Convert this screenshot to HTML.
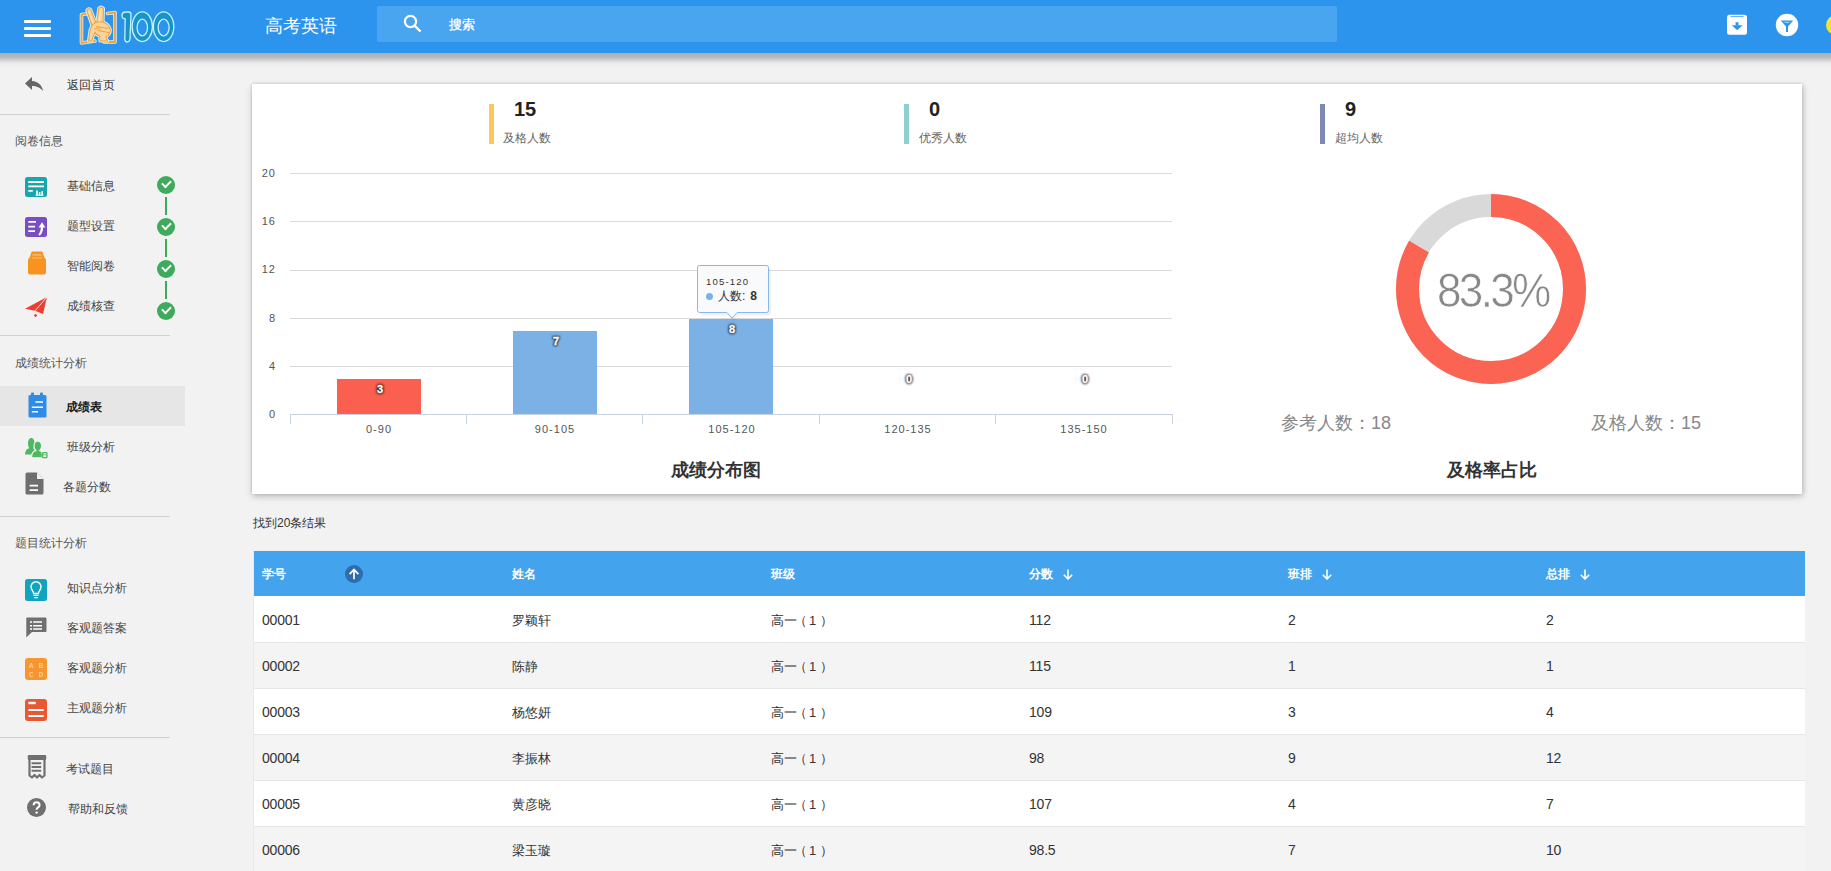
<!DOCTYPE html>
<html><head><meta charset="utf-8">
<style>
*{box-sizing:border-box;margin:0;padding:0}
html,body{width:1831px;height:871px;overflow:hidden;background:#f2f2f2;font-family:"Liberation Sans",sans-serif;color:#333}
.abs{position:absolute}
#hdr{position:absolute;left:0;top:0;width:1831px;height:53px;background:#2c94ec;z-index:5}
#hsh{position:absolute;left:0;top:53px;width:1831px;height:16px;z-index:4;background:linear-gradient(#9db4cc 0px,#b5b3b2 2px,#b9b8b8 4px,#c3c9cf 6px,#dcdbd8 8px,#e9e9e8 10px,#efefef 12px,#f2f2f2 16px)}
#side{position:absolute;left:0;top:52px;width:185px;height:819px}
.sd{position:absolute;left:0;width:170px;height:1px;background:#d0d0d0}
.st{position:absolute;left:15px;font-size:12px;color:#555;line-height:14px;white-space:nowrap}
.it{position:absolute;left:67px;font-size:12px;color:#444;line-height:14px;white-space:nowrap}
.ic{position:absolute}
.chk{position:absolute;left:157px;width:18px;height:18px;border-radius:50%;background:#3daa5c}
.chk:after{content:"";position:absolute;left:5px;top:4px;width:7px;height:4px;border-left:2px solid #fff;border-bottom:2px solid #fff;transform:rotate(-45deg)}
.vl{position:absolute;left:165px;width:2px;background:#3daa5c}
#card{position:absolute;left:252px;top:84px;width:1550px;height:410px;background:#fff;box-shadow:0 3px 7px rgba(0,0,0,.16),2px 1px 5px rgba(0,0,0,.12),-1px 0 2px rgba(0,0,0,.07),0 -1px 2px rgba(0,0,0,.04)}
.sbar{position:absolute;width:5px;height:40px;top:104px}
.snum{position:absolute;top:98px;font-size:20px;font-weight:bold;color:#222;line-height:22px}
.slab{position:absolute;top:131px;font-size:12px;color:#666;line-height:14px;white-space:nowrap}
.yl{position:absolute;font-size:11px;color:#555;width:30px;text-align:right;line-height:12px;letter-spacing:1px}
.gl{position:absolute;left:290px;width:882px;height:1px;background:#dadada}
.xl{position:absolute;font-size:11px;color:#555;text-align:center;width:178px;line-height:12px;letter-spacing:1px}
.bar{position:absolute;background:#7cb1e6}
.blab{position:absolute;font-size:11px;font-weight:bold;color:#fff;text-align:center;width:84px;line-height:12px;-webkit-text-stroke:0.3px #fff}
.bsh{position:absolute;font-size:11px;font-weight:bold;color:#111;text-align:center;width:84px;line-height:12px;-webkit-text-stroke:2.2px #111;filter:blur(1px);opacity:.85}
#tbl{position:absolute;left:254px;top:551px;width:1551px;box-shadow:-1px 0 0 #e8e8e8}
.tr{position:relative;height:46px;border-bottom:1px solid #e6e6e6}
.th{height:46px;background:#44a3ed;border-bottom:1px solid #fbfdff}
.td{position:absolute;top:1px;line-height:45px;font-size:13px;color:#333;white-space:nowrap}
.n{font-size:14px;letter-spacing:-0.2px}
.pl{margin-left:-3px;margin-right:2px}.pr{margin-left:4px}
.th .td{top:1px;line-height:45px;font-size:12px;font-weight:bold;color:#fff}
</style></head><body>

<div id="hdr">
  <!-- hamburger -->
  <div class="abs" style="left:24px;top:20px;width:27px;height:3px;background:#fff;border-radius:1px"></div>
  <div class="abs" style="left:24px;top:27px;width:27px;height:3px;background:#fff;border-radius:1px"></div>
  <div class="abs" style="left:24px;top:34px;width:27px;height:3px;background:#fff;border-radius:1px"></div>
  <!-- logo -->
  <svg class="abs" style="left:74px;top:2px" width="106" height="48" viewBox="74 2 106 48">
    <g fill="none" stroke-linejoin="round" stroke-linecap="round">
      <path d="M86 14 L81.5 14.5 L81.5 43 L95 41" stroke="#d6f1ff" stroke-width="3.6"/>
      <path d="M107.5 13.5 L115 12.5 L115 42 L104 42" stroke="#d6f1ff" stroke-width="3.6"/>
      <path d="M86 14 L81.5 14.5 L81.5 43 L95 41" stroke="#f2a33a" stroke-width="2"/>
      <path d="M107.5 13.5 L115 12.5 L115 42 L104 42" stroke="#f2a33a" stroke-width="2"/>
    </g>
    <g stroke-linejoin="round" stroke-linecap="round">
      <g fill="none" stroke="#d6f1ff" stroke-width="3">
        <path d="M86.8 10.5 Q88.5 7.5 90.8 9.8 L95.5 22 L92.5 27 Z"/>
        <path d="M98.7 8.5 Q101 5.8 103.5 8.3 L103 23 L96.8 23 Z"/>
        <path d="M92 25 Q96 21 103 22 Q109 24 110.5 30 Q110 35 106 36.5 L107.5 41 L100 41 L99.5 36 Q96 35 95 32 L91.5 41 L88.5 41 L90 30 Z"/>
      </g>
      <g fill="#f7d59c" stroke="#f0a23c" stroke-width="1.1">
        <path d="M86.8 10.5 Q88.5 7.5 90.8 9.8 L95.5 22 L92.5 27 Z"/>
        <path d="M98.7 8.5 Q101 5.8 103.5 8.3 L103 23 L96.8 23 Z"/>
        <path d="M92 25 Q96 21 103 22 Q109 24 110.5 30 Q110 35 106 36.5 L107.5 41 L100 41 L99.5 36 Q96 35 95 32 L91.5 41 L88.5 41 L90 30 Z"/>
      </g>
      <path d="M96.5 26.5 L108 28.5 M97.5 30.5 L108.5 32.5 M94.5 29 Q98 26.5 101 30" fill="none" stroke="#f0a23c" stroke-width="1"/>
      <path d="M89 12 L93 23 M100 10 L99.5 21" fill="none" stroke="#fbe9c8" stroke-width="0.9"/>
    </g>
    <g fill="#1795cb" stroke="#c4f2ff" stroke-width="1.3" fill-rule="evenodd">
      <path d="M122 15.5 Q122 12 126 12 L128.5 12 Q131 12 131 14.5 L130 39 Q129.5 42 127.2 42 Q124.8 42 124.8 39 L125.2 19 Q122 18.8 122 15.5 Z"/>
      <path d="M142.3 11.8 A10.1 14.9 0 1 1 142.3 41.6 A10.1 14.9 0 1 1 142.3 11.8 Z M142.3 19.2 A5.2 8.3 0 1 0 142.3 35.8 A5.2 8.3 0 1 0 142.3 19.2 Z"/>
      <path d="M163.6 11.8 A10.2 14.9 0 1 1 163.6 41.6 A10.2 14.9 0 1 1 163.6 11.8 Z M163.6 19.2 A5.5 8.3 0 1 0 163.6 35.8 A5.5 8.3 0 1 0 163.6 19.2 Z"/>
    </g>
  </svg>
  <div class="abs" style="left:265px;top:15px;font-size:18px;color:#fff;line-height:22px">高考英语</div>
  <div class="abs" style="left:377px;top:6px;width:960px;height:36px;background:#4aa5f1;border-radius:2px"></div>
  <svg class="abs" style="left:403px;top:14px" width="19" height="19" viewBox="0 0 19 19"><circle cx="7.5" cy="7.5" r="5.6" fill="none" stroke="#fff" stroke-width="2.2"/><path d="M11.5 11.5 L17.5 17.5" stroke="#fff" stroke-width="2.4"/></svg>
  <div class="abs" style="left:449px;top:17px;font-size:13px;color:#fff;line-height:15px;-webkit-text-stroke:0.3px #fff">搜索</div>
  <!-- right icons -->
  <svg class="abs" style="left:1727px;top:14px" width="21" height="22" viewBox="0 0 21 22"><rect x="0" y="0.8" width="20" height="20" rx="2.5" fill="#fff"/><path d="M3.5 2.6 H16.5" stroke="#2c94ec" stroke-width="0.8"/><rect x="8.6" y="8.2" width="2.8" height="3.5" fill="#2c94ec"/><path d="M4.8 11.3 H15.6 L10.2 16.3 Z" fill="#2c94ec"/></svg>
  <svg class="abs" style="left:1775px;top:13px" width="24" height="24" viewBox="0 0 24 24"><circle cx="12" cy="12" r="11.2" fill="#fff"/><path d="M5.8 7.6 H18.2 L13 13.4 V19 H11 V13.4 Z" fill="#2c94ec"/><path d="M8 8.8 H16 L12 10.2 Z" fill="#9fd8fb"/></svg>
  <div class="abs" style="left:1826px;top:15px;width:20px;height:20px;border-radius:50%;background:#f4e236"></div>
</div>

<div id="hsh"></div>
<div id="side"></div>
<!-- sidebar content in page coords -->
<svg class="abs" style="left:24px;top:76px" width="20" height="16" viewBox="0 0 20 16"><path d="M8 1 L1 7.5 L8 14 V10 C13 10 16 11.5 19 15 C18 9 14 5.5 8 5 Z" fill="#666"/></svg>
<div class="it" style="left:67px;top:78px;color:#333">返回首页</div>
<div class="sd" style="top:114px"></div>

<div class="st" style="top:134px">阅卷信息</div>
<svg class="abs" style="left:25px;top:177px" width="22" height="20" viewBox="0 0 22 20"><rect width="22" height="20" rx="2.5" fill="#17a6ab"/><path d="M3.3 5 H19 M3.3 9.4 H19 M3.3 13.8 H7.8" stroke="#fff" stroke-width="1.8"/><path d="M10.5 18.3 H18.5" stroke="#fff" stroke-width="1"/><rect x="11.2" y="13.5" width="1.6" height="4.6" fill="#fff"/><rect x="13.8" y="15" width="1.6" height="3.2" fill="#fff"/><rect x="16.4" y="14.2" width="1.6" height="4" fill="#fff"/></svg>
<div class="it" style="top:179px">基础信息</div>
<div class="chk" style="top:176px"></div>
<div class="vl" style="top:197px;height:18px"></div>
<svg class="abs" style="left:25px;top:217px" width="22" height="20" viewBox="0 0 22 20"><rect width="22" height="20" rx="2.5" fill="#7a4ec3"/><path d="M3.3 4.8 H11 M3.3 9.6 H10 M3.3 14.1 H10" stroke="#fff" stroke-width="1.8"/><path d="M14 18 C16.5 16 17 13 17 9.5" fill="none" stroke="#fff" stroke-width="2.2"/><path d="M13.6 10.5 L17 5.2 L20.4 10.5 Z" fill="#fff"/></svg>
<div class="it" style="top:219px">题型设置</div>
<div class="chk" style="top:218px"></div>
<div class="vl" style="top:239px;height:18px"></div>
<svg class="abs" style="left:28px;top:251px" width="18" height="24" viewBox="0 0 18 24"><path d="M3.5 1 Q3.5 0.5 4 0.5 H14 Q14.5 0.5 14.5 1 L16.5 7 Q18 7.5 18 9 V21.5 Q18 23.5 16 23.5 H2 Q0 23.5 0 21.5 V9 Q0 7.5 1.5 7 Z" fill="#f7931e"/><path d="M4.5 3.8 H13.5 M4 7 H14" stroke="#fbc27e" stroke-width="1.2"/></svg>
<div class="it" style="top:259px">智能阅卷</div>
<div class="chk" style="top:260px"></div>
<div class="vl" style="top:281px;height:18px"></div>
<svg class="abs" style="left:25px;top:296px" width="23" height="22" viewBox="0 0 23 22"><path d="M0 12.7 L22 1 L18 18 L10 14.8 Z" fill="#ee3d2f"/><path d="M22 1 L10 14.8" stroke="#fff" stroke-width="0.8"/><rect x="9.3" y="18.2" width="2.5" height="2.5" fill="#ee3d2f" transform="rotate(45 10.5 19.5)"/></svg>
<div class="it" style="top:299px">成绩核查</div>
<div class="chk" style="top:302px"></div>
<div class="sd" style="top:335px"></div>

<div class="st" style="top:356px">成绩统计分析</div>
<div class="abs" style="left:0;top:386px;width:185px;height:40px;background:#e6e6e6"></div>
<svg class="abs" style="left:28px;top:392px" width="19" height="26" viewBox="0 0 19 26"><path d="M2 3 H17 Q18.5 3 18.5 4.5 V24 Q18.5 25.5 17 25.5 H2 Q0.5 25.5 0.5 24 V4.5 Q0.5 3 2 3 Z" fill="#2f8be6"/><rect x="3" y="0.5" width="3" height="4" rx="1" fill="#2f8be6"/><rect x="12" y="0.5" width="3" height="4" rx="1" fill="#2f8be6"/><path d="M7.4 10 H15 M3.8 15.3 H15 M3.8 19.8 H10" stroke="#fff" stroke-width="1.6"/></svg>
<div class="it" style="left:66px;top:400px;font-weight:bold;color:#222">成绩表</div>
<svg class="abs" style="left:25px;top:437px" width="23" height="22" viewBox="0 0 23 22"><path d="M3 6 A3.3 5 0 0 1 9.6 6 Q9.6 9.5 8.3 11.2 L9.5 12 Q10 16 8 17.6 H0 Q0 12.5 4.2 11.3 Q3 9.5 3 6 Z" fill="#4cb860"/><path d="M9 8.7 A3.8 4.6 0 0 1 16.6 8.7 Q16.6 12 14.8 13.6 Q17.3 14 17.3 17 V20.8 H6.6 Q6.6 14 10.8 13.6 Q9 12 9 8.7 Z" fill="#4cb860" stroke="#f2f2f2" stroke-width="1.2"/><rect x="17.6" y="15.6" width="4.3" height="5" rx="0.6" fill="#f2f2f2" stroke="#4cb860" stroke-width="1.3"/><path d="M18 17.8 H21.5" stroke="#4cb860" stroke-width="0.8"/></svg>
<div class="it" style="top:440px">班级分析</div>
<svg class="abs" style="left:25px;top:472px" width="19" height="23" viewBox="0 0 19 23"><path d="M2 0.5 H12 L18.5 7 V21 Q18.5 22.5 17 22.5 H2 Q0.5 22.5 0.5 21 V2 Q0.5 0.5 2 0.5 Z" fill="#6e6e6e"/><path d="M12 0.5 V7 H18.5" fill="#fff" opacity="0.9"/><path d="M4.6 13.7 H13 M4.6 18.2 H13" stroke="#fff" stroke-width="1.8"/></svg>
<div class="it" style="left:63px;top:480px">各题分数</div>
<div class="sd" style="top:516px"></div>

<div class="st" style="top:536px">题目统计分析</div>
<svg class="abs" style="left:25px;top:579px" width="22" height="22" viewBox="0 0 22 22"><rect width="22" height="22" rx="2.5" fill="#12a3c0"/><path d="M8.6 14.5 C8.6 12 6 11 6 7.8 A5 5 0 0 1 16 7.8 C16 11 13.4 12 13.4 14.5 Z" fill="none" stroke="#fff" stroke-width="1.4"/><path d="M8.5 16.3 H13.5 M9 18.6 H13" stroke="#fff" stroke-width="1.3"/></svg>
<div class="it" style="top:581px">知识点分析</div>
<svg class="abs" style="left:26px;top:617px" width="21" height="21" viewBox="0 0 21 21"><path d="M1 0.5 H19.5 Q20.5 0.5 20.5 1.5 V14 Q20.5 15 19.5 15 H6 L0.3 20.5 V1.5 Q0.3 0.5 1 0.5 Z" fill="#6f6f6f"/><path d="M4 5 H6 M4 8.7 H6 M4 12 H6 M7.2 5 H16 M7.2 8.7 H16 M7.2 12 H16" stroke="#fff" stroke-width="1.6"/></svg>
<div class="it" style="top:621px">客观题答案</div>
<svg class="abs" style="left:25px;top:658px" width="22" height="22" viewBox="0 0 22 22"><rect width="22" height="22" rx="3" fill="#f8952e"/><text x="6.3" y="9.5" font-family="Liberation Mono" font-size="7.5" fill="#fde0bd" text-anchor="middle">A</text><text x="16" y="9.5" font-family="Liberation Mono" font-size="7.5" fill="#fde0bd" text-anchor="middle">B</text><text x="6.3" y="19" font-family="Liberation Mono" font-size="7.5" fill="#fde0bd" text-anchor="middle">C</text><text x="16" y="19" font-family="Liberation Mono" font-size="7.5" fill="#fde0bd" text-anchor="middle">D</text></svg>
<div class="it" style="top:661px">客观题分析</div>
<svg class="abs" style="left:25px;top:699px" width="22" height="22" viewBox="0 0 22 22"><rect width="22" height="22" rx="3" fill="#ea5733"/><path d="M3.4 4 H10.7" stroke="#fff" stroke-width="2.4"/><path d="M3.4 11 H18.7 M3.4 17 H18.7" stroke="#fff" stroke-width="2"/></svg>
<div class="it" style="top:701px">主观题分析</div>
<div class="sd" style="top:737px"></div>

<svg class="abs" style="left:27px;top:754px" width="20" height="25" viewBox="0 0 20 25"><path d="M2.5 5 V21.5 L5 23.5 L7.5 21 L10 23.5 L12.5 21 L15 23.5 L17.5 21.5 V5" fill="none" stroke="#707070" stroke-width="2.2" stroke-linejoin="round"/><rect x="0.8" y="1" width="18.4" height="5" rx="1.2" fill="#707070"/><path d="M4.6 9.2 H14.2 M4.6 13 H14.2 M4.6 16.7 H14.2" stroke="#707070" stroke-width="2"/></svg>
<div class="it" style="left:66px;top:762px">考试题目</div>
<svg class="abs" style="left:27px;top:798px" width="19" height="19" viewBox="0 0 19 19"><circle cx="9.5" cy="9.5" r="9.5" fill="#707070"/><path d="M6.6 7.3 Q6.6 4.2 9.6 4.2 Q12.6 4.2 12.6 7 Q12.6 8.6 10.8 9.6 Q9.6 10.3 9.6 11.8" fill="none" stroke="#fff" stroke-width="2"/><circle cx="9.6" cy="14.6" r="1.2" fill="#fff"/></svg>
<div class="it" style="left:68px;top:802px">帮助和反馈</div>

<!-- card -->
<div id="card"></div>
<div class="sbar" style="left:489px;background:#fcc85d"></div>
<div class="snum" style="left:514px">15</div>
<div class="slab" style="left:503px">及格人数</div>
<div class="sbar" style="left:904px;background:#8ecfd2"></div>
<div class="snum" style="left:929px">0</div>
<div class="slab" style="left:919px">优秀人数</div>
<div class="sbar" style="left:1320px;background:#7e89b3"></div>
<div class="snum" style="left:1345px">9</div>
<div class="slab" style="left:1335px">超均人数</div>

<div class="yl" style="left:246px;top:167px">20</div>
<div class="yl" style="left:246px;top:215px">16</div>
<div class="yl" style="left:246px;top:263px">12</div>
<div class="yl" style="left:246px;top:312px">8</div>
<div class="yl" style="left:246px;top:360px">4</div>
<div class="yl" style="left:246px;top:408px">0</div>
<div class="gl" style="top:173px"></div>
<div class="gl" style="top:221px"></div>
<div class="gl" style="top:270px"></div>
<div class="gl" style="top:318px"></div>
<div class="gl" style="top:366px"></div>
<div class="gl" style="top:414px;background:#c7d3e0"></div>
<div class="abs" style="left:290px;top:414px;width:1px;height:10px;background:#c7d3e0"></div>
<div class="abs" style="left:466px;top:414px;width:1px;height:10px;background:#c7d3e0"></div>
<div class="abs" style="left:642px;top:414px;width:1px;height:10px;background:#c7d3e0"></div>
<div class="abs" style="left:819px;top:414px;width:1px;height:10px;background:#c7d3e0"></div>
<div class="abs" style="left:995px;top:414px;width:1px;height:10px;background:#c7d3e0"></div>
<div class="abs" style="left:1172px;top:414px;width:1px;height:10px;background:#c7d3e0"></div>
<div class="xl" style="left:290px;top:423px">0-90</div>
<div class="xl" style="left:466px;top:423px">90-105</div>
<div class="xl" style="left:643px;top:423px">105-120</div>
<div class="xl" style="left:819px;top:423px">120-135</div>
<div class="xl" style="left:995px;top:423px">135-150</div>

<div class="bar" style="left:337px;top:379px;width:84px;height:35px;background:#fa5f4f"></div>
<div class="bar" style="left:513px;top:331px;width:84px;height:83px"></div>
<div class="bar" style="left:689px;top:319px;width:84px;height:95px"></div>
<div class="bsh" style="left:338px;top:383px">3</div><div class="blab" style="left:338px;top:383px">3</div>
<div class="bsh" style="left:514px;top:335px">7</div><div class="blab" style="left:514px;top:335px">7</div>
<div class="bsh" style="left:690px;top:323px">8</div><div class="blab" style="left:690px;top:323px">8</div>
<div class="bsh" style="left:867px;top:373px">0</div><div class="blab" style="left:867px;top:373px">0</div>
<div class="bsh" style="left:1043px;top:373px">0</div><div class="blab" style="left:1043px;top:373px">0</div>

<!-- tooltip -->
<svg class="abs" style="left:694px;top:262px" width="80" height="60" viewBox="0 0 80 60">
  <path d="M7 5.5 H74 Q76 5.5 76 7.5 V50.5 Q76 52.5 74 52.5 H43 L38 58 L33 52.5 H7 Q5 52.5 5 50.5 V7.5 Q5 5.5 7 5.5 Z" fill="rgba(0,0,0,.06)" transform="translate(1 1)"/>
  <path d="M5.5 3.5 H72.5 Q74.5 3.5 74.5 5.5 V48.5 Q74.5 50.5 72.5 50.5 H43 L38 56 L33 50.5 H5.5 Q3.5 50.5 3.5 48.5 V5.5 Q3.5 3.5 5.5 3.5 Z" fill="#f9fafc" stroke="#86b8ea" stroke-width="1"/>
</svg>
<div class="abs" style="left:706px;top:276px;font-size:9.5px;color:#333;line-height:11px;letter-spacing:1.2px">105-120</div>
<div class="abs" style="left:706px;top:293px;width:7px;height:7px;border-radius:50%;background:#7cb1e6"></div>
<div class="abs" style="left:718px;top:289px;font-size:12px;color:#333;line-height:14px;white-space:nowrap">人数:&thinsp;&thinsp;<b>8</b></div>

<div class="abs" style="left:671px;top:459px;font-size:18px;font-weight:bold;color:#333;line-height:22px">成绩分布图</div>

<!-- donut -->
<svg class="abs" style="left:1391px;top:189px" width="200" height="200" viewBox="0 0 200 200">
  <circle cx="100" cy="100" r="83.5" fill="none" stroke="#d9d9d9" stroke-width="23"/>
  <circle cx="100" cy="100" r="83.5" fill="none" stroke="#fb6352" stroke-width="23" stroke-dasharray="437.2 600" transform="rotate(-90 100 100)"/>
</svg>
<div class="abs" style="left:1437px;top:264px;font-size:49px;color:#888;line-height:53px;letter-spacing:-3px;transform:scaleX(0.9);transform-origin:0 0;-webkit-text-stroke:0.7px #fff;white-space:nowrap">83.3%</div>
<div class="abs" style="left:1281px;top:412px;font-size:18px;color:#888;line-height:22px">参考人数：18</div>
<div class="abs" style="left:1591px;top:412px;font-size:18px;color:#888;line-height:22px">及格人数：15</div>
<div class="abs" style="left:1447px;top:459px;font-size:18px;font-weight:bold;color:#333;line-height:22px">及格率占比</div>

<div class="abs" style="left:253px;top:516px;font-size:12px;color:#333;line-height:14px">找到20条结果</div>

<div id="tbl">
  <div class="tr th">
    <div class="td" style="left:8px">学号</div>
    <svg class="abs" style="left:91px;top:14px" width="18" height="18" viewBox="0 0 18 18"><circle cx="9" cy="9" r="9" fill="#2d6cae"/><path d="M9 14.2 V4.8 M4.6 9.2 L9 4.6 L13.4 9.2" fill="none" stroke="#fff" stroke-width="1.7"/></svg>
    <div class="td" style="left:258px">姓名</div>
    <div class="td" style="left:517px">班级</div>
    <div class="td" style="left:775px">分数</div>
    <svg class="abs" style="left:809px;top:18px" width="10" height="11" viewBox="0 0 10 11"><path d="M5 0.5 V10 M0.8 5.8 L5 10 L9.2 5.8" fill="none" stroke="#fff" stroke-width="1.6"/></svg>
    <div class="td" style="left:1034px">班排</div>
    <svg class="abs" style="left:1068px;top:18px" width="10" height="11" viewBox="0 0 10 11"><path d="M5 0.5 V10 M0.8 5.8 L5 10 L9.2 5.8" fill="none" stroke="#fff" stroke-width="1.6"/></svg>
    <div class="td" style="left:1292px">总排</div>
    <svg class="abs" style="left:1326px;top:18px" width="10" height="11" viewBox="0 0 10 11"><path d="M5 0.5 V10 M0.8 5.8 L5 10 L9.2 5.8" fill="none" stroke="#fff" stroke-width="1.6"/></svg>
  </div>
  <div class="tr" style="background:#fff"><div class="td n" style="left:8px">00001</div><div class="td" style="left:258px">罗颖轩</div><div class="td" style="left:517px">高一<span class="pl">（</span>1<span class="pr">）</span></div><div class="td n" style="left:775px">112</div><div class="td n" style="left:1034px">2</div><div class="td n" style="left:1292px">2</div></div>
  <div class="tr" style="background:#f4f4f4"><div class="td n" style="left:8px">00002</div><div class="td" style="left:258px">陈静</div><div class="td" style="left:517px">高一<span class="pl">（</span>1<span class="pr">）</span></div><div class="td n" style="left:775px">115</div><div class="td n" style="left:1034px">1</div><div class="td n" style="left:1292px">1</div></div>
  <div class="tr" style="background:#fff"><div class="td n" style="left:8px">00003</div><div class="td" style="left:258px">杨悠妍</div><div class="td" style="left:517px">高一<span class="pl">（</span>1<span class="pr">）</span></div><div class="td n" style="left:775px">109</div><div class="td n" style="left:1034px">3</div><div class="td n" style="left:1292px">4</div></div>
  <div class="tr" style="background:#f4f4f4"><div class="td n" style="left:8px">00004</div><div class="td" style="left:258px">李振林</div><div class="td" style="left:517px">高一<span class="pl">（</span>1<span class="pr">）</span></div><div class="td n" style="left:775px">98</div><div class="td n" style="left:1034px">9</div><div class="td n" style="left:1292px">12</div></div>
  <div class="tr" style="background:#fff"><div class="td n" style="left:8px">00005</div><div class="td" style="left:258px">黄彦晓</div><div class="td" style="left:517px">高一<span class="pl">（</span>1<span class="pr">）</span></div><div class="td n" style="left:775px">107</div><div class="td n" style="left:1034px">4</div><div class="td n" style="left:1292px">7</div></div>
  <div class="tr" style="background:#f4f4f4"><div class="td n" style="left:8px">00006</div><div class="td" style="left:258px">梁玉璇</div><div class="td" style="left:517px">高一<span class="pl">（</span>1<span class="pr">）</span></div><div class="td n" style="left:775px">98.5</div><div class="td n" style="left:1034px">7</div><div class="td n" style="left:1292px">10</div></div>
</div>

</body></html>
